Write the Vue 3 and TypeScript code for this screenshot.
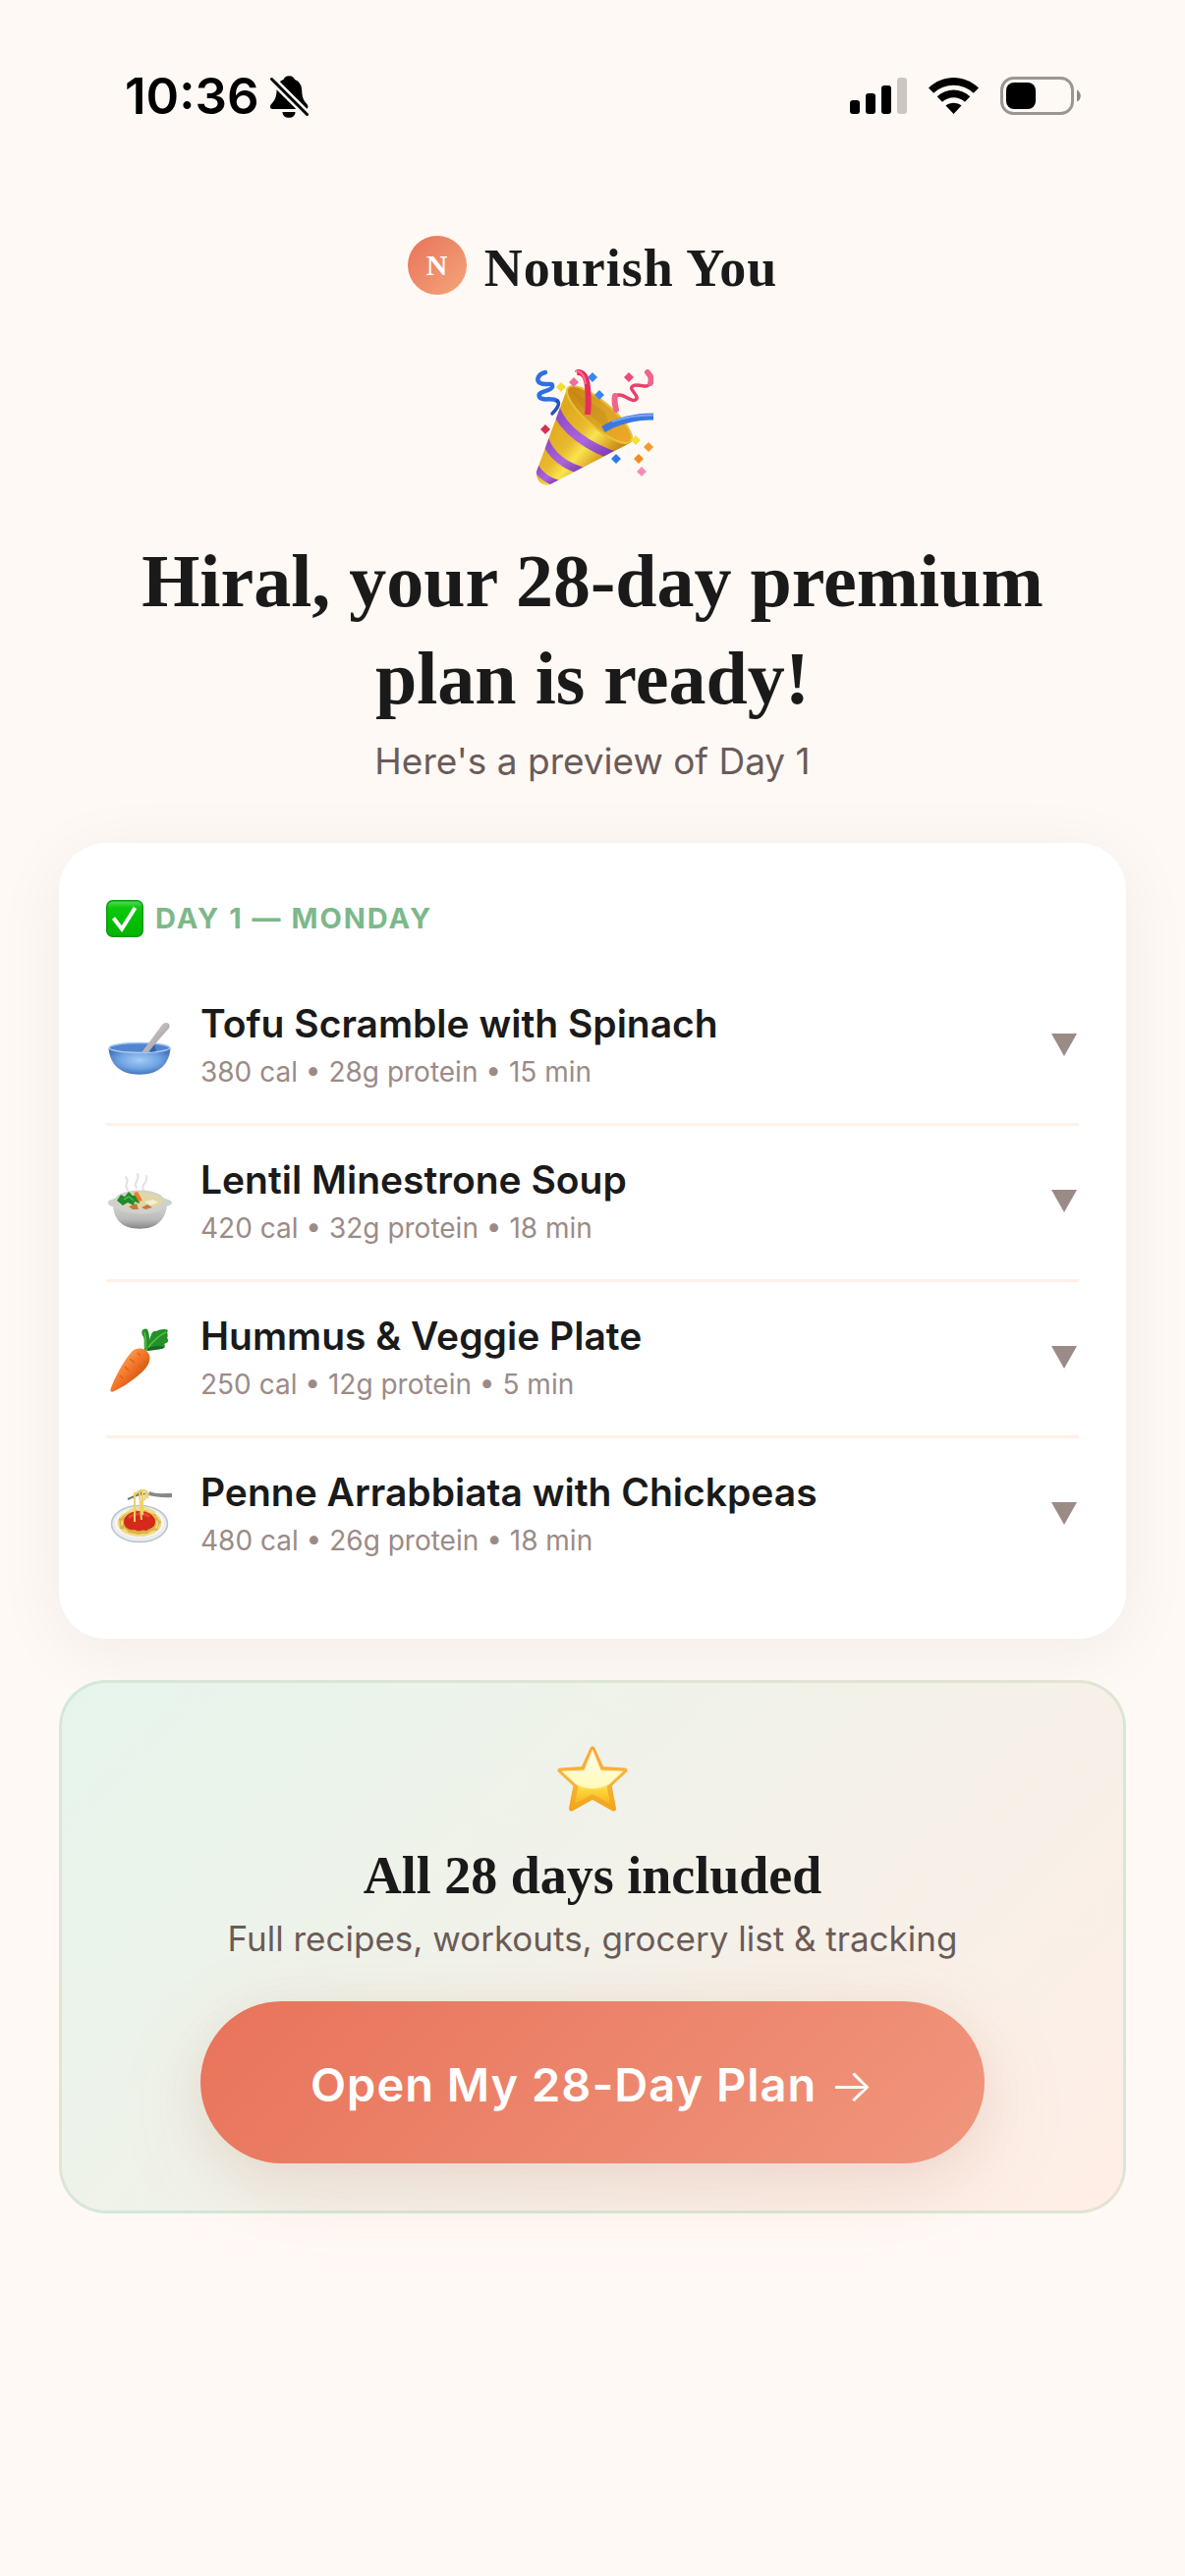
<script setup lang="ts">
type MealIcon = 'bowl' | 'soup' | 'carrot' | 'pasta'

interface Meal {
  icon: MealIcon
  name: string
  meta: string
}

const meals: Meal[] = [
  { icon: 'bowl', name: 'Tofu Scramble with Spinach', meta: '380 cal • 28g protein • 15 min' },
  { icon: 'soup', name: 'Lentil Minestrone Soup', meta: '420 cal • 32g protein • 18 min' },
  { icon: 'carrot', name: 'Hummus & Veggie Plate', meta: '250 cal • 12g protein • 5 min' },
  { icon: 'pasta', name: 'Penne Arrabbiata with Chickpeas', meta: '480 cal • 26g protein • 18 min' },
]
</script>

<template>
  <div class="screen">
    <div class="status">
      <div class="status-left">
        <span class="time">10:36</span>
        <svg class="bell" viewBox="0 0 40 44" aria-hidden="true">
          <path d="M20.300 1.300C17 1.300 15 3.300 14.500 5C9.500 7 7.800 11 7.600 16C7.300 23 5.500 26.500 2.500 29.500C.5 31.500 .2 35 3.500 35H37C40 35 40 31.500 38 29.500C34.800 26 33.500 23 33.200 16C33 11 31 7 26 5C25.500 3.300 23.500 1.300 20.300 1.300Z" fill="#000" />
          <path d="M13.500 38H26.500C26.500 41.500 24 43.800 20 43.800S13.500 41.500 13.500 38Z" fill="#000" />
          <path d="M0 2L40 42" stroke="#fff9f5" stroke-width="8" />
          <path d="M2.500 4.500L38.500 40.500" stroke="#000" stroke-width="3" stroke-linecap="round" />
        </svg>
      </div>
      <div class="status-right">
        <svg width="58" height="38" viewBox="0 0 58 38" aria-hidden="true">
          <rect x="0" y="23" width="10" height="14" rx="3" />
          <rect x="16" y="16" width="10" height="21" rx="3" />
          <rect x="32" y="8" width="10" height="29" rx="3" />
          <rect x="48" y="0" width="10" height="37" rx="3" fill="#ccc6c3" />
        </svg>
        <svg width="51" height="38" viewBox="0 0 51 38" aria-hidden="true">
          <path d="M0 10.500C14.500-3.500 36.500-3.500 51 10.500L45.800 15.800C34.500 5 16.500 5 5.200 15.800Z" />
          <path d="M8.700 19.300C18.500 10.300 32.500 10.300 42.300 19.300L37 24.800C30.500 18.700 20.500 18.700 14 24.800Z" />
          <path d="M17.500 28.500C22 24.800 29 24.800 33.500 28.500L25.500 37Z" />
        </svg>
        <svg width="82" height="40" viewBox="0 0 82 40" aria-hidden="true">
          <rect x="1.500" y="1.500" width="72" height="36" rx="12" fill="none" stroke="#9b9693" stroke-width="3" />
          <rect x="6" y="6" width="30" height="27" rx="8" />
          <path d="M78 13.500C83 16 83 23.500 78 25.500Z" fill="#8b8784" />
        </svg>
      </div>
    </div>

    <header class="brand">
      <span class="logo">N</span>
      <span class="brand-name">Nourish You</span>
    </header>

    <main class="content">
      <svg class="party" viewBox="0 0 124 124" aria-hidden="true">
        <defs>
          <linearGradient id="cone" x1="0.150" y1="0.400" x2="0.700" y2="0.900">
            <stop offset="0" stop-color="#e0aa20" />
            <stop offset="0.350" stop-color="#e9b92f" />
            <stop offset="0.550" stop-color="#f9e44e" />
            <stop offset="0.800" stop-color="#dba324" />
            <stop offset="1" stop-color="#b97a10" />
          </linearGradient>
          <linearGradient id="mouth" x1="0" y1="0" x2="1" y2="0">
            <stop offset="0" stop-color="#c98412" />
            <stop offset="0.500" stop-color="#d9a425" />
            <stop offset="1" stop-color="#f0a726" />
          </linearGradient>
          <linearGradient id="stripe" x1="0" y1="0" x2="1" y2="1">
            <stop offset="0" stop-color="#8a45c4" />
            <stop offset="0.550" stop-color="#ac66dc" />
            <stop offset="1" stop-color="#6e2ca6" />
          </linearGradient>
          <clipPath id="cone-clip">
            <path d="M36 25L5 109C4 118 11 124 18 122.500L99 80C90 80 42 45 36 25Z" />
          </clipPath>
        </defs>
        <path d="M36 25L5 109C4 118 11 124 18 122.500L100 80C92 82 42 47 36 25Z" fill="url(#cone)" />
        <g clip-path="url(#cone-clip)" fill="none" stroke="url(#stripe)">
          <path d="M24 44C32 66 56 84 90 95" stroke-width="9" />
          <path d="M13 75C20 95 36 105 58 110" stroke-width="8" />
          <path d="M3 102C8 113 18 119 30 122" stroke-width="7" />
        </g>
        <ellipse cx="69" cy="51" rx="42" ry="13" transform="rotate(40.500 69 51)" fill="url(#mouth)" stroke="#e9c23a" stroke-width="2" />
        <path d="M42 27C48 42 62 56 82 68L74 48Z" fill="#a96b10" opacity="0.200" />
        <path d="M46 8C53 7 56 13 57 23C58 34 58 43 57 51" fill="none" stroke="#e62e5c" stroke-width="6" />
        <path d="M44 7C50 6 54 11 55 20" fill="none" stroke="#ff6f8f" stroke-width="2" />
        <path d="M124 53C105 53 88 57 73 66" fill="none" stroke="#3d78e0" stroke-width="7" />
        <path d="M124 51.500C107 51 94 54 82 58" fill="none" stroke="#7aa8f5" stroke-width="2" />
        <g fill="none" stroke-linecap="round" stroke-linejoin="round">
          <path d="M14 8C6 10 4 17 9 19C15 22 22 17 21 23C19 28 5 27 8 33C11 38 20 33 26 37" stroke="#2f6fe4" stroke-width="4.500" />
          <path d="M26 37C30 40 25 46 21 50" stroke="#2354b8" stroke-width="3.500" />
          <path d="M86 46C83 36 84 31 89 31C97 31 102 40 107 35C109 31 98 25 103 22C109 18 117 26 121 19C123 14 120 10 118 8" stroke="#e6416c" stroke-width="3.500" />
          <path d="M86 46C84.500 40 84 36 85 32M121 19C123 14 120 10 118 8" stroke="#f0668b" stroke-width="6" />
        </g>
        <path d="M30 18L35 23L30 28L25 23Z" fill="#f2df2e" />
        <path d="M43 13L48 18L43 23L38 18Z" fill="#ee6f9a" />
        <path d="M62 8L67 13L62 18L57 13Z" fill="#3c86f0" />
        <path d="M69 26L74 31L69 36L64 31Z" fill="#3c86f0" />
        <path d="M99 8L104 13L99 18L94 13Z" fill="#ee4a78" />
        <path d="M14 61L19 66L14 71L9 66Z" fill="#d0304f" />
        <path d="M106 72L111 77L106 82L101 77Z" fill="#f5e03a" />
        <path d="M119 79L124 84L119 89L114 84Z" fill="#f59a2c" />
        <path d="M109 91L114 96L109 101L104 96Z" fill="#f08d22" />
        <path d="M86 91L91 96L86 101L81 96Z" fill="#2f78e8" />
        <path d="M112 104L117 109L112 114L107 109Z" fill="#f58fb4" />
      </svg>

      <h1 class="headline">Hiral, your 28-day premium plan is ready!</h1>
      <p class="lede">Here's a preview of Day 1</p>

      <section class="card">
        <h2 class="day">
          <svg class="check" viewBox="0 0 38 38" aria-hidden="true">
            <defs>
              <linearGradient id="check-fill" x1="0" y1="0" x2="0" y2="1">
                <stop offset="0" stop-color="#5bd95b" />
                <stop offset="0.200" stop-color="#0cc80c" />
                <stop offset="1" stop-color="#00b400" />
              </linearGradient>
            </defs>
            <rect x="0.750" y="0.750" width="36.500" height="36.500" rx="6" fill="url(#check-fill)" stroke="#0a9a12" stroke-width="1.500" />
            <path d="M7.500 18.500L16 29.500L29.500 8" fill="none" stroke="#fff" stroke-width="4" />
          </svg>
          <span>DAY 1 — MONDAY</span>
        </h2>

        <ul class="meals">
          <li v-for="meal in meals" :key="meal.name" class="meal-item">
            <button type="button" class="meal" aria-expanded="false">
              <svg v-if="meal.icon === 'bowl'" class="meal-icon" viewBox="0 0 66 66" aria-hidden="true">
                <defs>
                  <radialGradient id="bowl-fill" cx="0.500" cy="0.450" r="0.550">
                    <stop offset="0" stop-color="#a6cbf7" />
                    <stop offset="0.600" stop-color="#6ea3e3" />
                    <stop offset="1" stop-color="#4674b8" />
                  </radialGradient>
                  <linearGradient id="spoon-fill" x1="0" y1="0" x2="1" y2="1">
                    <stop offset="0" stop-color="#dcdadb" />
                    <stop offset="1" stop-color="#9b8f96" />
                  </linearGradient>
                </defs>
                <path d="M2.500 35C4 52 15 61.700 34 61.700S64 52 65.500 35Z" fill="url(#bowl-fill)" />
                <ellipse cx="34" cy="34.500" rx="30.800" ry="5" fill="#5385cf" stroke="#a5c8f3" stroke-width="1.500" />
                <path d="M49 30L44 39L51 38Z" fill="#3562a6" />
                <path d="M36 39.500L57 11C60 7 66.500 9 64 14.500L43 38.500Z" fill="url(#spoon-fill)" />
              </svg>
              <svg v-else-if="meal.icon === 'soup'" class="meal-icon" viewBox="0 0 66 66" aria-hidden="true">
                <defs>
                  <linearGradient id="pot-fill" x1="0" y1="0" x2="0" y2="1">
                    <stop offset="0" stop-color="#d2d3d1" />
                    <stop offset="0.600" stop-color="#b9bbb9" />
                    <stop offset="1" stop-color="#858785" />
                  </linearGradient>
                </defs>
                <g fill="none" stroke="#e2e2e2" stroke-width="2" stroke-linecap="round">
                  <path d="M22 20C17 14 25 12 20 7" />
                  <path d="M31 18C27 12 35 10 32 4" />
                  <path d="M38 20C34 15 44 12 41 6" />
                </g>
                <path d="M7 36C8 52 18 59.700 34 59.700S60 52 62 36Z" fill="url(#pot-fill)" />
                <path d="M10 28C16 18 52 18 58 28C62 30 66 30 67 33C67 37 60 36 58 39C50 46 20 46 11 39C8 37 2 37 2 33C2 30 7 30 10 28Z" fill="#cfd1cf" />
                <ellipse cx="34.500" cy="31" rx="23" ry="8.500" fill="#e0d6a8" />
                <path d="M23 37L31 34L33 40L27 40ZM36 38L42 35L47 38L40 40Z" fill="#c47a3a" />
                <path d="M39 32L48 30L53 33L45 36Z" fill="#f7edd0" />
                <path d="M11 31L15 25L19 27L23 22L27 26L32 25L34 34L29 32L28 36L22 33L17 36Z" fill="#1f8a2c" />
                <path d="M18 30L23 27L28 31" fill="none" stroke="#4cb84a" stroke-width="1.500" />
                <path d="M28 23L32 22L37 31L33 32Z" fill="#f07c28" />
              </svg>
              <svg v-else-if="meal.icon === 'carrot'" class="meal-icon" viewBox="0 0 66 66" aria-hidden="true">
                <defs>
                  <linearGradient id="carrot-fill" x1="0.200" y1="0.200" x2="0.750" y2="0.750">
                    <stop offset="0.150" stop-color="#fb9a4a" />
                    <stop offset="0.500" stop-color="#f4772a" />
                    <stop offset="1" stop-color="#cf5210" />
                  </linearGradient>
                </defs>
                <path d="M39 24C38 17 40 13 37 9C35 5 38 1 42 3C44 7 44 11 44 14C46 8 47 4 51 5C54 3 60 2 63 4C61 7 64 9 62 12C65 15 62 17 59 18C62 21 57 24 53 23C48 22 45 22 41 25Z" fill="#23902a" />
                <path d="M41 24C46 17 52 10 61 6M40 22C41 16 40 10 39 6" fill="none" stroke="#5abf3d" stroke-width="1.500" />
                <path d="M42 22C48 20 55 20 60 21C57 24 48 24 42 25Z" fill="#146a22" />
                <path d="M4.500 64C8 54 17 36 26 26C31 21 39 22 42 26C46 30 45 37 40 43C32 52 16 63 7 66.500C5 67 4 66 4.500 64Z" fill="url(#carrot-fill)" />
                <path d="M24 33L29 37M19 41L23 45M33 40L36 43M14 50L17 53M32 27L35 30" stroke="#d9601b" stroke-width="1.200" fill="none" />
              </svg>
              <svg v-else class="meal-icon" viewBox="0 0 66 66" aria-hidden="true">
                <ellipse cx="34" cy="42" rx="28.500" ry="18.500" fill="#e9edef" stroke="#b9c3c9" stroke-width="1.500" />
                <ellipse cx="34" cy="41" rx="25" ry="15" fill="#f7f8f8" />
                <ellipse cx="34" cy="41" rx="22" ry="13.500" fill="#d9b24a" />
                <g fill="none" stroke="#f4db7d" stroke-width="2">
                  <ellipse cx="34" cy="41" rx="21.500" ry="13" stroke-dasharray="7 3" />
                  <ellipse cx="34" cy="42" rx="18" ry="11.500" stroke-dasharray="5 4" />
                  <path d="M20 32C26 24 40 24 50 31M18 49C26 55 42 56 50 49" />
                </g>
                <path d="M18 40C18 33 26 29 34 29S50 33 50 40C50 46 44 47 41 49C37 47 33 51 29 48C24 49 18 46 18 40Z" fill="#d42a1a" />
                <path d="M24 35C29 31 38 31 43 34" fill="none" stroke="#e8482e" stroke-width="3" stroke-linecap="round" />
                <path d="M44 9C50 12 58 11 67 11V15C58 16 49 14 43 13Z" fill="#85888c" />
                <path d="M42 11L31 13L22 17M36 10L29 13" fill="none" stroke="#74777b" stroke-width="2" />
                <g fill="none" stroke="#ecd06a" stroke-width="2">
                  <path d="M29 10V40M34 9L36 38M37 8V33M41 9L39 18" />
                  <path d="M30 12C36 5 44 7 42 16" />
                </g>
              </svg>
              <span class="meal-text">
                <span class="meal-name">{{ meal.name }}</span>
                <span class="meal-meta">{{ meal.meta }}</span>
              </span>
              <svg class="caret" viewBox="0 0 26 24" aria-hidden="true"><path d="M0 0H26L13 23Z" fill="#9b8b87" /></svg>
            </button>
          </li>
        </ul>
      </section>

      <section class="offer">
        <svg class="star" viewBox="0 0 76 72" aria-hidden="true">
          <defs>
            <linearGradient id="star-fill" x1="0" y1="0" x2="0" y2="1">
              <stop offset="0" stop-color="#fff3c4" />
              <stop offset="0.550" stop-color="#fff07a" />
              <stop offset="0.650" stop-color="#fddc40" />
              <stop offset="1" stop-color="#f7a814" />
            </linearGradient>
            <linearGradient id="star-edge" x1="0" y1="0" x2="0" y2="1">
              <stop offset="0" stop-color="#fba43a" />
              <stop offset="0.500" stop-color="#f5b63c" />
              <stop offset="1" stop-color="#f3a41c" />
            </linearGradient>
            <linearGradient id="star-gloss" x1="0" y1="0" x2="0" y2="1">
              <stop offset="0" stop-color="#fffdf0" />
              <stop offset="1" stop-color="#fffab8" />
            </linearGradient>
          </defs>
          <path d="M38 5L47.500 25.500L71 27L55 42L59.500 66L38 54L16.500 66L21 42L5 27L28.500 25.500Z" fill="url(#star-fill)" stroke="url(#star-edge)" stroke-width="5" stroke-linejoin="round" />
          <path d="M38 6L46.500 27L69 28L55 41C45 47 31 47 21 41L7 28L29.500 27Z" fill="url(#star-gloss)" stroke="#ffe79a" stroke-width="1" stroke-linejoin="round" />
        </svg>
        <h2 class="offer-title">All 28 days included</h2>
        <p class="offer-text">Full recipes, workouts, grocery list &amp; tracking</p>
        <button type="button" class="cta">Open My 28-Day Plan <span class="arrow">→</span></button>
      </section>
    </main>
  </div>
</template>

<style>
body {
  margin: 0;
  background: #fff9f5;
}
</style>

<style scoped>
.screen {
  min-height: 100vh;
  box-sizing: border-box;
  background: #fff9f5;
  color: #1a1a1a;
  font-family: Inter, "Liberation Sans", sans-serif;
}

.status {
  display: flex;
  justify-content: space-between;
  align-items: center;
  padding: 62px 106px 0 127px;
}

.status-left {
  display: flex;
  align-items: center;
  gap: 10px;
}

.time {
  font-size: 51px;
  line-height: 72px;
  font-weight: 600;
  color: #000;
}

.bell {
  width: 40px;
  height: 44px;
}

.status-right {
  display: flex;
  align-items: center;
  gap: 22px;
}

.brand {
  display: flex;
  justify-content: center;
  align-items: flex-start;
  gap: 18px;
  margin-top: 106px;
  font-family: "Liberation Serif", serif;
  font-weight: 700;
}

.logo {
  width: 60px;
  height: 60px;
  border-radius: 50%;
  background: linear-gradient(135deg, #e8735a, #f4a57a);
  color: #fff;
  font-size: 30px;
  line-height: 60px;
  text-align: center;
}

.brand-name {
  font-size: 54px;
  line-height: 66px;
  letter-spacing: 1px;
}

.content {
  padding: 0 60px 60px;
  text-align: center;
}

.party {
  display: block;
  width: 124px;
  height: 124px;
  margin: 65px auto 47px;
}

.headline {
  margin: 0;
  padding: 0 48px;
  font-family: "Liberation Serif", serif;
  font-size: 76px;
  line-height: 99px;
  font-weight: 700;
}

.lede {
  margin: 0 0 48px;
  font-size: 37px;
  line-height: 70px;
  color: #6b5b58;
}

.card {
  padding: 48px;
  border-radius: 48px;
  background: #fff;
  box-shadow: 0 12px 72px rgba(40, 25, 15, 0.06);
  text-align: left;
}

.day {
  display: flex;
  align-items: center;
  gap: 12px;
  margin: 0 0 24px;
  font-size: 29px;
  line-height: 57px;
  font-weight: 700;
  letter-spacing: 2px;
  color: #7db88a;
}

.check {
  width: 38px;
  height: 38px;
}

.meals {
  margin: 0;
  padding: 0;
  list-style: none;
}

.meal-item + .meal-item {
  border-top: 3px solid #fff0e8;
}

.meal {
  display: flex;
  align-items: center;
  gap: 30px;
  width: 100%;
  padding: 0;
  border: 0;
  background: none;
  color: inherit;
  font: inherit;
  text-align: left;
}

.meal-icon {
  flex: none;
  width: 66px;
  height: 66px;
  overflow: visible;
}

.meal-text {
  flex: 1;
  display: flex;
  flex-direction: column;
  padding: 25px 0 33px;
}

.meal-name {
  font-size: 39px;
  line-height: 60px;
  font-weight: 600;
}

.meal-meta {
  font-size: 28px;
  line-height: 38px;
  color: #9b8b87;
}

.caret {
  flex: none;
  width: 26px;
  height: 24px;
  margin: 0 2px 2px 0;
}

.offer {
  margin-top: 42px;
  padding: 48px;
  border: 3px solid rgba(125, 184, 138, 0.2);
  border-radius: 48px;
  background: linear-gradient(135deg, #e6f5ec, #ffeee6);
}

.star {
  display: block;
  width: 76px;
  height: 72px;
  margin: 14px auto 26px;
}

.offer-title {
  margin: 0;
  font-family: "Liberation Serif", serif;
  font-size: 54px;
  line-height: 72px;
  font-weight: 700;
}

.offer-text {
  margin: 0 0 35px;
  font-size: 35px;
  line-height: 57px;
  color: #6b5b58;
}

.cta {
  padding: 50px 112px 46px;
  border: 0;
  border-radius: 84px;
  background: linear-gradient(135deg, #e8735a, #f0967d);
  box-shadow: 0 24px 96px rgba(232, 115, 90, 0.12), 0 12px 48px rgba(120, 60, 40, 0.08);
  color: #fff;
  font: inherit;
  font-size: 47px;
  line-height: 69px;
  font-weight: 600;
  letter-spacing: 1px;
}

.arrow {
  font-weight: 300;
}
</style>
